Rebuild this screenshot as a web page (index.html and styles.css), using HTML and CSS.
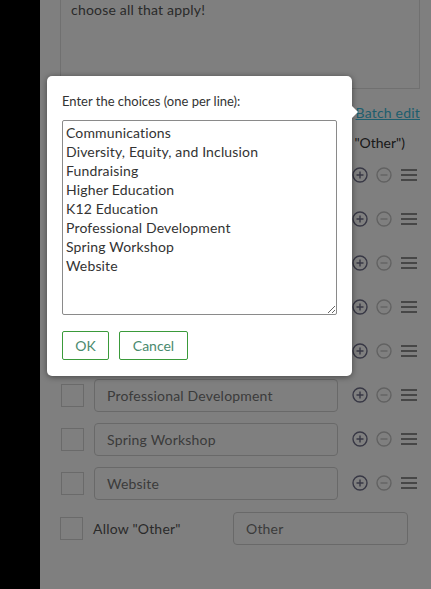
FILE: index.html
```html
<!DOCTYPE html>
<html lang="en">
<head>
<meta charset="utf-8">
<title>Choices</title>
<link rel="stylesheet" href="styles.css">
</head>
<body>
<div class="page">
  <div class="sidebar"></div>
  <main class="main">
    <div class="desc">choose all that apply!</div>
    <div class="batch"><a href="#">Batch edit</a></div>
    <div class="choices-label">Choices (you can also allow "Other")</div>

    <div class="row"><span class="check"></span><div class="field">Communications</div><span class="tools"><svg class="plus" viewBox="0 0 16 16"><circle cx="8" cy="8" r="7"/><path d="M8 4.5v7M4.5 8h7"/></svg><svg class="minus" viewBox="0 0 16 16"><circle cx="8" cy="8" r="7"/><path d="M4.5 8h7"/></svg><svg class="menu" viewBox="0 0 16 12"><path d="M0 1h16M0 6h16M0 11h16"/></svg></span></div>
    <div class="row"><span class="check"></span><div class="field">Diversity, Equity, and Inclusion</div><span class="tools"><svg class="plus" viewBox="0 0 16 16"><circle cx="8" cy="8" r="7"/><path d="M8 4.5v7M4.5 8h7"/></svg><svg class="minus" viewBox="0 0 16 16"><circle cx="8" cy="8" r="7"/><path d="M4.5 8h7"/></svg><svg class="menu" viewBox="0 0 16 12"><path d="M0 1h16M0 6h16M0 11h16"/></svg></span></div>
    <div class="row"><span class="check"></span><div class="field">Fundraising</div><span class="tools"><svg class="plus" viewBox="0 0 16 16"><circle cx="8" cy="8" r="7"/><path d="M8 4.5v7M4.5 8h7"/></svg><svg class="minus" viewBox="0 0 16 16"><circle cx="8" cy="8" r="7"/><path d="M4.5 8h7"/></svg><svg class="menu" viewBox="0 0 16 12"><path d="M0 1h16M0 6h16M0 11h16"/></svg></span></div>
    <div class="row"><span class="check"></span><div class="field">Higher Education</div><span class="tools"><svg class="plus" viewBox="0 0 16 16"><circle cx="8" cy="8" r="7"/><path d="M8 4.5v7M4.5 8h7"/></svg><svg class="minus" viewBox="0 0 16 16"><circle cx="8" cy="8" r="7"/><path d="M4.5 8h7"/></svg><svg class="menu" viewBox="0 0 16 12"><path d="M0 1h16M0 6h16M0 11h16"/></svg></span></div>
    <div class="row"><span class="check"></span><div class="field">K12 Education</div><span class="tools"><svg class="plus" viewBox="0 0 16 16"><circle cx="8" cy="8" r="7"/><path d="M8 4.5v7M4.5 8h7"/></svg><svg class="minus" viewBox="0 0 16 16"><circle cx="8" cy="8" r="7"/><path d="M4.5 8h7"/></svg><svg class="menu" viewBox="0 0 16 12"><path d="M0 1h16M0 6h16M0 11h16"/></svg></span></div>
    <div class="row"><span class="check"></span><div class="field">Professional Development</div><span class="tools"><svg class="plus" viewBox="0 0 16 16"><circle cx="8" cy="8" r="7"/><path d="M8 4.5v7M4.5 8h7"/></svg><svg class="minus" viewBox="0 0 16 16"><circle cx="8" cy="8" r="7"/><path d="M4.5 8h7"/></svg><svg class="menu" viewBox="0 0 16 12"><path d="M0 1h16M0 6h16M0 11h16"/></svg></span></div>
    <div class="row"><span class="check"></span><div class="field">Spring Workshop</div><span class="tools"><svg class="plus" viewBox="0 0 16 16"><circle cx="8" cy="8" r="7"/><path d="M8 4.5v7M4.5 8h7"/></svg><svg class="minus" viewBox="0 0 16 16"><circle cx="8" cy="8" r="7"/><path d="M4.5 8h7"/></svg><svg class="menu" viewBox="0 0 16 12"><path d="M0 1h16M0 6h16M0 11h16"/></svg></span></div>
    <div class="row"><span class="check"></span><div class="field">Website</div><span class="tools"><svg class="plus" viewBox="0 0 16 16"><circle cx="8" cy="8" r="7"/><path d="M8 4.5v7M4.5 8h7"/></svg><svg class="minus" viewBox="0 0 16 16"><circle cx="8" cy="8" r="7"/><path d="M4.5 8h7"/></svg><svg class="menu" viewBox="0 0 16 12"><path d="M0 1h16M0 6h16M0 11h16"/></svg></span></div>

    <div class="other-row"><span class="check check-other"></span><span class="other-label">Allow "Other"</span><div class="field field-other">Other</div></div>
  </main>
  <div class="overlay"></div>
  <div class="popup">
    <label class="popup-label" for="choices">Enter the choices (one per line):</label>
    <textarea id="choices" class="popup-text">Communications
Diversity, Equity, and Inclusion
Fundraising
Higher Education
K12 Education
Professional Development
Spring Workshop
Website</textarea>
    <div class="popup-buttons">
      <button class="btn btn-ok">OK</button>
      <button class="btn btn-cancel">Cancel</button>
    </div>
  </div>
</div>
</body>
</html>
```
FILE: styles.css
```css
* { box-sizing: border-box; }
html, body { margin: 0; padding: 0; }
body {
  width: 431px;
  height: 589px;
  overflow: hidden;
  font-family: "Lato", "Noto Sans", sans-serif;
  font-size: 14px;
  color: #555;
}
.page {
  position: relative;
  display: flex;
  width: 431px;
  height: 589px;
  overflow: hidden;
}
.sidebar { width: 40px; flex: none; background: #000; }
.main {
  flex: 1;
  background: #fff;
  padding: 0 11px 0 20px;
  display: flex;
  flex-direction: column;
}
.desc {
  margin-top: -12px;
  height: 101px;
  flex: none;
  border: 1px solid #e0e0e0;
  padding: 11px 10px;
  line-height: 20px;
  color: #555;
  letter-spacing: 0.2px;
}
.batch {
  margin-top: 14px;
  line-height: 20px;
  text-align: right;
}
.batch a { color: #3cbcdc; text-decoration: underline; letter-spacing: 0.2px; }
.choices-label {
  margin-top: 10px;
  line-height: 20px;
  text-align: right;
  padding-right: 15px;
  color: #333;
}
.row {
  height: 44px;
  flex: none;
  display: flex;
  align-items: center;
}
.check {
  width: 23px;
  height: 23px;
  flex: none;
  border: 1px solid #d4d4d4;
  margin-left: 1px;
}
.field {
  height: 33px;
  border: 1px solid #d2d2d2;
  border-radius: 4px;
  padding: 0 12px;
  display: flex;
  align-items: center;
  color: #777;
  white-space: nowrap;
  overflow: hidden;
  letter-spacing: 0.2px;
}
.row .field { width: 244px; margin-left: 10px; }
.tools {
  display: flex;
  align-items: center;
  margin-left: 14px;
  gap: 8px;
}
.tools svg { fill: none; stroke-width: 1.4; }
.plus, .minus { width: 16px; height: 16px; }
.plus { stroke: #70708a; }
.minus { stroke: #c4c4c4; }
.menu { width: 16px; height: 12px; stroke: #6a6a6a; stroke-width: 2; margin-left: 1px; }
.other-row {
  height: 46px;
  flex: none;
  display: flex;
  align-items: center;
}
.check-other { margin-left: 0; }
.other-label { margin-left: 10px; width: 140px; color: #555; letter-spacing: 0.2px; }
.field-other { width: 175px; }
.overlay {
  position: absolute;
  inset: 0;
  background: rgba(0, 0, 0, 0.5);
}
.popup {
  position: absolute;
  left: 47px;
  top: 76px;
  width: 305px;
  height: 300px;
  background: #fff;
  border-radius: 5px;
  box-shadow: 0 1px 6px rgba(0, 0, 0, 0.45);
  padding: 15px 15px;
  display: flex;
  flex-direction: column;
}
.popup::after {
  content: "";
  position: absolute;
  right: -6px;
  top: 30px;
  border-style: solid;
  border-width: 6px 0 6px 6px;
  border-color: transparent transparent transparent #fff;
}
.popup-label {
  line-height: 20px;
  font-size: 13px;
  color: #333;
}
.popup-text {
  margin-top: 9px;
  width: 275px;
  height: 195px;
  border: 1px solid #8a8a8a;
  border-radius: 2px;
  padding: 2px 3px;
  font: inherit;
  font-size: 14px;
  line-height: 19px;
  color: #333;
  letter-spacing: 0.15px;
  resize: vertical;
  outline: none;
}
.popup-buttons {
  margin-top: 16px;
  display: flex;
  gap: 10px;
}
.btn {
  height: 29px;
  background: #fff;
  border: 1px solid #3a9a3a;
  border-radius: 2px;
  font: inherit;
  font-size: 14px;
  color: #4a8a6e;
  padding: 0;
}
.btn-ok { width: 47px; }
.btn-cancel { width: 69px; }
```
